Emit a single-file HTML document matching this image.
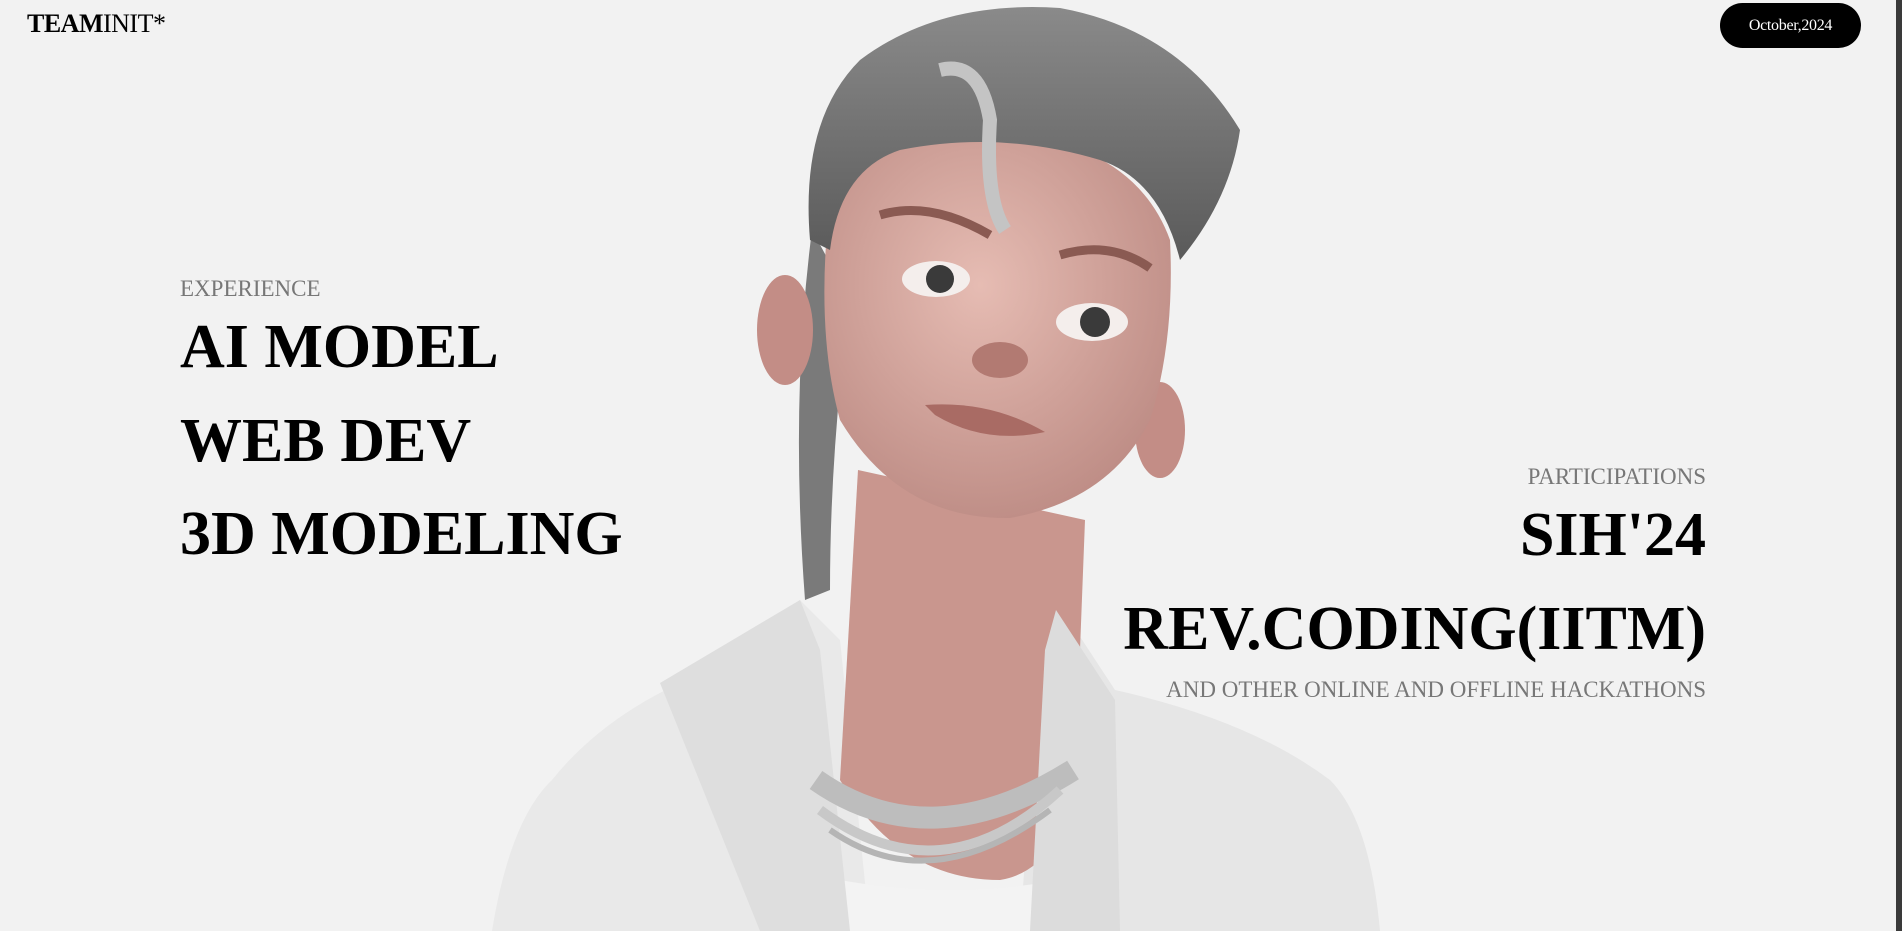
<!DOCTYPE html>
<html><head><meta charset="utf-8">
<style>
html,body{margin:0;padding:0;}
body{width:1902px;height:931px;background:#f2f2f2;position:relative;overflow:hidden;font-family:"Liberation Serif",serif;}
.edge{position:absolute;right:0;top:0;width:6px;height:931px;background:#3a3a3a;}
.logo{position:absolute;left:27px;top:9px;font-size:26px;color:#000;letter-spacing:-0.5px;}
.pill{position:absolute;left:1720px;top:3px;width:141px;height:45px;border-radius:23px;background:#000;color:#fff;font-size:16px;display:flex;align-items:center;justify-content:center;letter-spacing:-0.3px;}
.lbl{position:absolute;font-size:23px;color:#777;white-space:nowrap;}
.big{position:absolute;font-size:62px;font-weight:bold;color:#000;line-height:1;white-space:nowrap;}
svg{position:absolute;left:0;top:0;}
</style></head><body>
<svg width="1902" height="931" viewBox="0 0 1902 931">
 <defs>
  <radialGradient id="sk" cx="0.45" cy="0.4" r="0.7"><stop offset="0" stop-color="#e6bcb3"/><stop offset="1" stop-color="#b98780"/></radialGradient>
  <linearGradient id="hr" x1="0" y1="0" x2="0" y2="1"><stop offset="0" stop-color="#8a8a8a"/><stop offset="1" stop-color="#5a5a5a"/></linearGradient>
 </defs>
 <path d="M812 230 Q790 400 805 600 L830 590 Q830 450 850 300 Z" fill="#7a7a7a"/>
 <path d="M492 931 Q510 820 552 780 Q600 720 680 683 L800 600 L840 640 L870 931 Z" fill="#e9e9e9"/>
 <path d="M1380 931 Q1370 820 1330 780 Q1250 720 1115 690 L1056 600 L1040 640 L1020 931 Z" fill="#e6e6e6"/>
 <path d="M858 470 L840 780 Q900 880 1000 880 Q1060 870 1075 780 L1085 520 Z" fill="#c9968e"/>
 <path d="M840 880 Q950 900 1060 880 L1070 931 L835 931 Z" fill="#f3f3f3"/>
 <path d="M660 683 L800 600 L820 650 L850 931 L760 931 Z" fill="#dedede"/>
 <path d="M1115 700 L1056 610 L1045 650 L1030 931 L1120 931 Z" fill="#dcdcdc"/>
 <path d="M816 780 Q930 860 1073 770" stroke="#bdbdbd" stroke-width="22" fill="none"/>
 <path d="M820 810 Q940 900 1060 790" stroke="#c8c8c8" stroke-width="10" fill="none"/>
 <path d="M830 830 Q930 900 1050 810" stroke="#b5b5b5" stroke-width="6" fill="none"/>
 <ellipse cx="785" cy="330" rx="28" ry="55" fill="#c38d86"/>
 <ellipse cx="1160" cy="430" rx="25" ry="48" fill="#c38d86"/>
 <path d="M830 200 Q830 140 960 130 Q1130 130 1170 240 Q1175 340 1150 420 Q1110 500 1010 518 Q900 520 840 420 Q815 330 830 200 Z" fill="url(#sk)"/>
 <path d="M810 240 Q800 120 860 60 Q940 0 1060 8 Q1180 30 1240 130 Q1230 200 1180 260 Q1160 180 1100 160 Q1000 130 900 150 Q840 170 830 250 Z" fill="url(#hr)"/>
 <path d="M940 70 Q980 60 990 120 Q985 200 1005 230" stroke="#c4c4c4" stroke-width="14" fill="none"/>
 <path d="M880 215 Q930 200 990 235" stroke="#8a5a52" stroke-width="9" fill="none"/>
 <path d="M1060 255 Q1110 240 1150 268" stroke="#8a5a52" stroke-width="9" fill="none"/>
 <ellipse cx="936" cy="279" rx="34" ry="18" fill="#f4eeec"/><circle cx="940" cy="279" r="14" fill="#3a3a3a"/>
 <ellipse cx="1092" cy="322" rx="36" ry="19" fill="#f4eeec"/><circle cx="1095" cy="322" r="15" fill="#3a3a3a"/>
 <ellipse cx="1000" cy="360" rx="28" ry="18" fill="#b27a72"/>
 <path d="M925 405 Q990 400 1045 432 Q985 445 935 415 Z" fill="#a96b64"/>
</svg>
<div class="edge"></div>
<div class="logo"><b>TEAM</b>INIT*</div>
<div class="pill">October,2024</div>
<div class="lbl" style="left:180px;top:276px;">EXPERIENCE</div>
<div class="big" style="left:180px;top:316px;">AI MODEL</div>
<div class="big" style="left:180px;top:410px;">WEB DEV</div>
<div class="big" style="left:180px;top:503px;">3D MODELING</div>
<div class="lbl" style="right:196px;top:464px;">PARTICIPATIONS</div>
<div class="big" style="right:196px;top:504px;">SIH'24</div>
<div class="big" style="right:196px;top:598px;">REV.CODING(IITM)</div>
<div class="lbl" style="right:196px;top:677px;">AND OTHER ONLINE AND OFFLINE HACKATHONS</div>
</body></html>
